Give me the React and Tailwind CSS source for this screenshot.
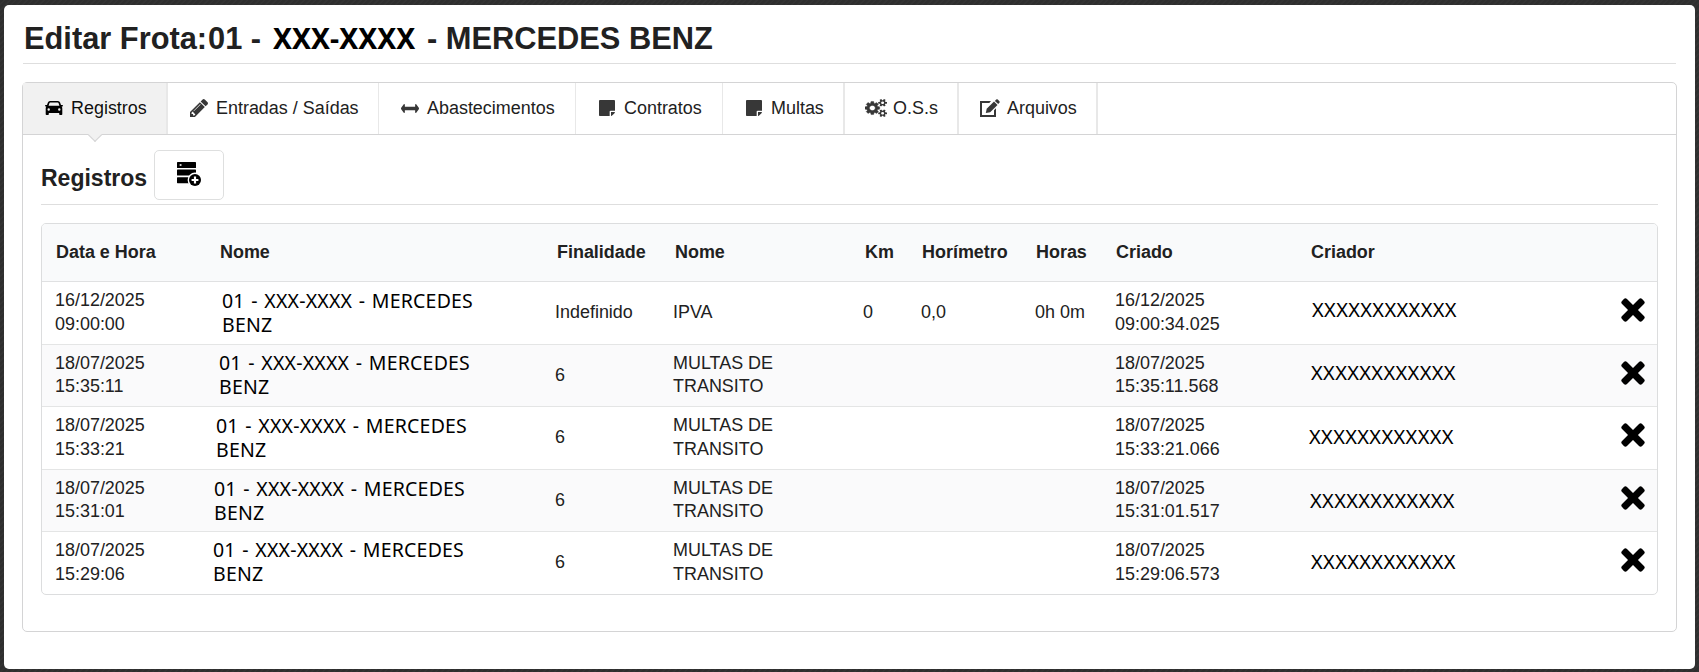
import React from 'react';
import clsx from 'clsx';

const GEAR =
  'M1920 198v-140q0 -16 -149 -31q-12 -27 -30 -52q51 -113 51 -138q0 -4 -4 -7q-122 -71 -124 -71q-8 0 -46 47t-52 68q-20 -2 -30 -2t-30 2q-14 -21 -52 -68t-46 -47q-2 0 -124 71q-4 3 -4 7q0 25 51 138q-18 25 -30 52q-149 15 -149 31v140q0 16 149 31q13 29 30 52q-51 113 -51 138q0 4 4 7q4 2 35 20t59 34t30 16q8 0 46 -46.5t52 -67.5q20 2 30 2t30 -2q51 71 92 112l6 2q4 0 124 -70q4 -3 4 -7q0 -25 -51 -138q17 -23 30 -52q149 -15 149 -31zM1664 128q0 52 -38 90t-90 38t-90 -38t-38 -90q0 -53 37.5 -90.5t90.5 -37.5t90.5 37.5t37.5 90.5z';

// Font glyphs are y-up, so every icon is flipped inside its own viewBox
const Glyph = ({ viewBox, className, children }) => (
  <svg viewBox={viewBox} preserveAspectRatio="none" fill="currentColor" className={clsx('shrink-0', className)}>
    <g transform="scale(1 -1)">{children}</g>
  </svg>
);

const CarIcon = () => (
  <svg viewBox="0 0 18 14" fill="currentColor" className="w-[18px] h-[14px] shrink-0">
    <path
      fillRule="evenodd"
      d="M5 0H13Q14.6 0 15.1 1.5L16 4H17.2Q18 4 18 4.8T17.2 5.6H16.6Q17.3 6.3 17.3 7.4V13.2Q17.3 14 16.5 14H15Q14.2 14 14.2 13.2V12H3.8V13.2Q3.8 14 3 14H1.5Q.7 14 .7 13.2V7.4Q.7 6.3 1.4 5.6H.8Q0 5.6 0 4.8T.8 4H2L2.9 1.5Q3.4 0 5 0ZM5.2 1.6Q4.6 1.6 4.4 2.2L3.6 4.800H14.400L13.6 2.2Q13.4 1.6 12.8 1.6ZM3.7 7.3A1.2 1.2 0 1 0 3.7 9.7A1.2 1.2 0 1 0 3.7 7.3ZM14.3 7.3A1.2 1.2 0 1 0 14.3 9.7A1.2 1.2 0 1 0 14.3 7.3Z"
    />
  </svg>
);

const PencilIcon = () => (
  <Glyph viewBox="0 -1387 1515 1515" className="w-[18px] h-[18px]">
    <path fillRule="evenodd" d="M363 0l91 91l-235 235l-91 -91v-107h128v-128h107zM886 928q0 22 -22 22q-10 0 -17 -7l-542 -542q-7 -7 -7 -17q0 -22 22 -22q10 0 17 7l542 542q7 7 7 17zM832 1120l416 -416l-832 -832h-416v416zM1515 1024q0 -53 -37 -90l-166 -166l-416 416l166 165q36 38 90 38q53 0 91 -38l235 -234q37 -39 37 -91z" />
  </Glyph>
);

const ArrowsIcon = () => (
  <Glyph viewBox="0 -960 1792 640" className="w-[18px] h-[9px]">
    <path d="M1792 640q0 -26 -19 -45l-256 -256q-19 -19 -45 -19t-45 19t-19 45v128h-1024v-128q0 -26 -19 -45t-45 -19t-45 19l-256 256q-19 19 -19 45t19 45l256 256q19 19 45 19t45 -19t19 -45v-128h1024v128q0 26 19 45t45 19t45 -19l256 -256q19 -19 19 -45z" />
  </Glyph>
);

const NoteIcon = () => (
  <Glyph viewBox="0 -1408 1536 1536" className="w-4 h-4">
    <path d="M1024 288v-416h-928q-40 0 -68 28t-28 68v1344q0 40 28 68t68 28h1344q40 0 68 -28t28 -68v-928h-416q-40 0 -68 -28t-28 -68zM1152 256h381q-15 -82 -65 -132l-184 -184q-50 -50 -132 -65v381z" />
  </Glyph>
);

const CogsIcon = () => (
  <Glyph viewBox="0 -1520 1920 1761" className="w-[22px] h-[18px]">
    <path fillRule="evenodd" d="M896 640q0 106 -75 181t-181 75t-181 -75t-75 -181t75 -181t181 -75t181 75t75 181zM1280 731v-185q0 -10 -7 -19.5t-16 -10.5l-155 -24q-11 -35 -32 -76q34 -48 90 -115q7 -11 7 -20q0 -12 -7 -19q-23 -30 -82.5 -89.5t-78.5 -59.5q-11 0 -21 7l-115 90q-37 -19 -77 -31q-11 -108 -23 -155q-7 -24 -30 -24h-186q-11 0 -20 7.5t-10 17.5l-23 153q-34 10 -75 31l-118 -89q-7 -7 -20 -7q-11 0 -21 8q-144 133 -144 160q0 9 7 19q10 14 41 53t47 61q-23 44 -35 82l-152 24q-10 1 -17 9.5t-7 19.5v185q0 10 7 19.5t16 10.5l155 24q11 35 32 76q-34 48 -90 115q-7 11 -7 20q0 12 7 20q22 30 82 89t79 59q11 0 21 -7l115 -90q34 18 77 32q11 108 23 154q7 24 30 24h186q11 0 20 -7.5t10 -17.5l23 -153q34 -10 75 -31l118 89q8 7 20 7q11 0 21 -8q144 -133 144 -160q0 -8 -7 -19q-12 -16 -42 -54t-45 -60q23 -48 34 -82l152 -23q10 -2 17 -10.5t7 -19.5z" stroke="currentColor" strokeWidth="40" />
    <path fillRule="evenodd" d={GEAR} />
    <path fillRule="evenodd" d={GEAR} transform="translate(0 1024)" />
  </Glyph>
);

const EditIcon = () => (
  <svg viewBox="0 0 20 18" fill="currentColor" className="w-5 h-[18px] shrink-0">
    <path d="M0 2H11L9.3 4H2V16H14V11.2L16 9.2V18H0Z" />
    <path d="M5.8 14L6.7 9.8L14 2.5L17.5 6L10.2 13.2Z" />
    <path d="M14.9 1.9L16.2 .6Q17 -.1 17.8 .6L19.4 2.2Q20 2.9 19.4 3.7L18.2 4.9Z" />
  </svg>
);

const TimesIcon = () => (
  <svg viewBox="0 0 24 24" fill="currentColor" className="w-6 h-6">
    <rect x="-2.2" y="8.5" width="28.4" height="7" rx="2.2" transform="rotate(45 12 12)" />
    <rect x="-2.2" y="8.5" width="28.4" height="7" rx="2.2" transform="rotate(-45 12 12)" />
  </svg>
);

const AddRecordIcon = () => (
  <svg viewBox="0 0 24 24" className="w-6 h-6">
    <rect x="0" y="0" width="19" height="6" rx=".6" />
    <rect x="0" y="7.6" width="19" height="6" rx=".6" />
    <rect x="0" y="15.2" width="14" height="6" rx=".6" />
    <circle cx="3.6" cy="3" r="1.1" fill="#ddd" />
    <circle cx="18" cy="18" r="7.4" fill="#fff" />
    <circle cx="18" cy="18" r="6" />
    <path d="M18 14.6V21.4M14.6 18H21.4" stroke="#fff" strokeWidth="2.2" />
  </svg>
);

const tabs = [
  { label: 'Registros', icon: <CarIcon />, className: 'w-[145px] pl-[22px] gap-[8px] border-r-2 border-[#dadada] bg-[#f1f1f1] text-black/95' },
  { label: 'Entradas / Saídas', icon: <PencilIcon />, className: 'w-[211px] pl-[22px] gap-[8px] border-r' },
  { label: 'Abastecimentos', icon: <ArrowsIcon />, className: 'w-[197px] pl-[22px] gap-[8px] border-r' },
  { label: 'Contratos', icon: <NoteIcon />, className: 'w-[147px] pl-[23px] gap-[9px] border-r' },
  { label: 'Multas', icon: <NoteIcon />, className: 'w-[122px] pl-[23px] gap-[9px] border-r-2' },
  { label: 'O.S.s', icon: <CogsIcon />, className: 'w-[114px] pl-[20px] gap-[6px] border-r-2' },
  { label: 'Arquivos', icon: <EditIcon />, className: 'w-[139px] pl-[21px] gap-[7px] border-r-2' },
];

const columns = [
  { title: 'Data e Hora', width: 'w-[164px]' },
  { title: 'Nome', width: 'w-[337px]' },
  { title: 'Finalidade', width: 'w-[118px]' },
  { title: 'Nome', width: 'w-[190px]' },
  { title: 'Km', width: 'w-[57px]' },
  { title: 'Horímetro', width: 'w-[114px]' },
  { title: 'Horas', width: 'w-[80px]' },
  { title: 'Criado', width: 'w-[195px]' },
  { title: 'Criador', width: 'w-[300px]' },
  { title: '', width: 'w-[60px]' },
];

const rows = [
  { date: '16/12/2025', time: '09:00:00', purpose: 'Indefinido', name: ['IPVA'], km: '0', meter: '0,0', hours: '0h 0m', created: '09:00:34.025', height: 'h-[63px]', vehicle: 'pl-[16px] pb-px', creator: 'pl-[15px] pb-[6px]' },
  { date: '18/07/2025', time: '15:35:11', purpose: '6', name: ['MULTAS DE', 'TRANSITO'], created: '15:35:11.568', height: 'h-[62px]', vehicle: 'pl-[13px] pb-px', creator: 'pl-[14px] pb-[5px]' },
  { date: '18/07/2025', time: '15:33:21', purpose: '6', name: ['MULTAS DE', 'TRANSITO'], created: '15:33:21.066', height: 'h-[63px]', vehicle: 'pl-[10px] pb-px', creator: 'pl-[12px] pb-[2px]' },
  { date: '18/07/2025', time: '15:31:01', purpose: '6', name: ['MULTAS DE', 'TRANSITO'], created: '15:31:01.517', height: 'h-[62px]', vehicle: 'pl-[8px] pt-px', creator: 'pl-[13px] pb-0' },
  { date: '18/07/2025', time: '15:29:06', purpose: '6', name: ['MULTAS DE', 'TRANSITO'], created: '15:29:06.573', height: 'h-[62px]', vehicle: 'pl-[7px] pb-[2px]', creator: 'pl-[14px] pb-[2px]' },
];

const Lines = ({ items }) => items.map((item) => <div key={item}>{item}</div>);

const RecordsTable = () => (
  <div className="mt-[18px] rounded-[5px] border border-[#dcddde] overflow-hidden">
    <table className="w-full table-fixed border-separate border-spacing-0 text-left leading-[23.5px]">
      <thead>
        <tr className="h-[58px] bg-[#f9fafb]">
          {columns.map((col, i) => (
            <th key={i} className={clsx(col.width, 'pl-[14px] border-b border-[#e0e1e2] font-bold')}>
              {col.title}
            </th>
          ))}
        </tr>
      </thead>
      <tbody className="[&>tr:nth-child(even)]:bg-[#fafafb] [&>tr:not(:last-child)>td]:border-b [&>tr>td]:border-[#e4e5e5]">
        {rows.map((row) => (
          <tr key={row.time} className={row.height}>
            <td className="pl-[13px] pb-px"><Lines items={[row.date, row.time]} /></td>
            <td className={clsx(row.vehicle, "font-['Noto_Sans'] text-[19.5px] leading-6 tracking-[0.2px] [word-spacing:1.3px] text-black")}>
              <Lines items={['01 - XXX-XXXX - MERCEDES', 'BENZ']} />
            </td>
            <td className="pl-[12px]">{row.purpose}</td>
            <td className="pl-[12px] pb-px"><Lines items={row.name} /></td>
            <td className="pl-[12px]">{row.km}</td>
            <td className="pl-[13px]">{row.meter}</td>
            <td className="pl-[13px]">{row.hours}</td>
            <td className="pl-[13px] pb-px"><Lines items={[row.date, row.created]} /></td>
            <td className={clsx(row.creator, "font-['Noto_Sans'] text-[20px] tracking-[0.35px] text-black")}>XXXXXXXXXXXX</td>
            <td className="pl-[24px] pb-[6px] text-black"><TimesIcon /></td>
          </tr>
        ))}
      </tbody>
    </table>
  </div>
);

const App = () => {
  return (
    <div className="h-[672px] w-[1699px] overflow-hidden bg-[#2f2f2f] bg-[repeating-linear-gradient(135deg,#2e2e2e_0px,#2e2e2e_2px,#333333_3px,#333333_4px)] pt-[5px] pl-1 font-['Liberation_Sans',sans-serif] text-[17.95px] text-[#212121]">
      <main className="h-[664px] w-[1691px] rounded-[5px] bg-white px-[18px]">
        <h1 className="mx-px flex h-[59px] border-b border-[#dedede] pt-[18px] pl-px text-[30.8px] font-bold leading-8 whitespace-pre">
          <span className="w-[184px]">Editar Frota:</span>
          <span className="w-[65px]">01 -</span>
          <span className="w-[154px] font-['Noto_Sans'] text-[28.4px] leading-[30px] text-black">XXX-XXXX</span>
          <span>- MERCEDES BENZ</span>
        </h1>

        <section className="mt-[18px] h-[550px] rounded-[5px] border border-[#d4d4d5]">
          {/* Tabs */}
          <nav className="flex h-[52px] border-b border-[#d4d4d5]">
            {tabs.map((tab, i) => (
              <div key={tab.label} className={clsx('relative flex items-center border-[#e8e8e8] pb-px', tab.className)}>
                <span className={i === 0 ? 'text-black' : 'text-[#373737]'}>{tab.icon}</span>
                <span>{tab.label}</span>
                {i === 0 && (
                  <span className="absolute left-[67px] -bottom-[6px] h-[10px] w-[10px] rotate-45 border-r border-b border-[#d4d4d5] bg-[#f1f1f1]" />
                )}
              </div>
            ))}
          </nav>

          <div className="px-[18px] pt-[15px]">
            {/* Section heading with the add button */}
            <div className="flex h-[55px] gap-[7px] border-b border-[#dedede]">
              <h2 className="w-[106px] pt-[14px] text-[23px] font-bold leading-7">Registros</h2>
              <button className="flex h-[50px] w-[70px] items-start justify-center rounded-[5px] border border-[#dedfdf] pt-[11px] text-black">
                <AddRecordIcon />
              </button>
            </div>
            <RecordsTable />
          </div>
        </section>
      </main>
    </div>
  );
};

export default App;
